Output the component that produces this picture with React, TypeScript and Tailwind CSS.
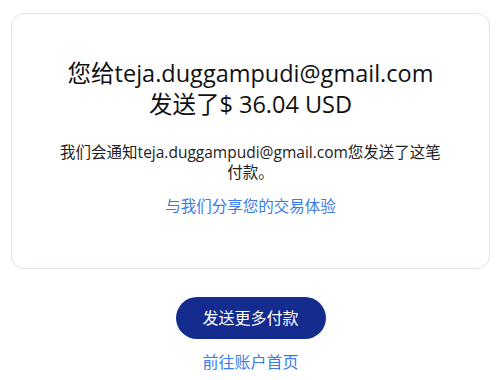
export default function App() {
  const font = {
    fontFamily: '"Open Sans", "Noto Sans CJK SC", sans-serif',
  };

  return (
    <div
      className="w-[500px] h-[380px] bg-white flex flex-col items-center pt-[13px] pl-[11px] pr-[10px]"
      style={font}
    >
      <section className="w-full h-[256px] rounded-[13px] border border-[#e4e3dc] flex flex-col items-center pt-[44px] px-10">
        <h1 className="text-[23.5px] leading-[31px] text-[#111] text-center font-normal">
          您给teja.duggampudi@gmail.com
          <br />
          发送了$ 36.04 USD
        </h1>
        <p className="mt-[22px] text-[15.5px] leading-[20px] text-[#222] text-center px-[8px]">
          我们会通知teja.duggampudi@gmail.com您发送了这笔付款。
        </p>
        <a
          href="#"
          className="mt-[14px] text-[15.5px] leading-[20px] text-[#3b7be8]"
        >
          与我们分享您的交易体验
        </a>
      </section>
      <button
        type="button"
        className="mt-[28px] w-[150px] h-[42px] rounded-full bg-[#142c8e] text-white text-[16px]"
      >
        发送更多付款
      </button>
      <a href="#" className="mt-[12px] text-[16px] leading-[22px] text-[#3b7be8]">
        前往账户首页
      </a>
    </div>
  );
}
